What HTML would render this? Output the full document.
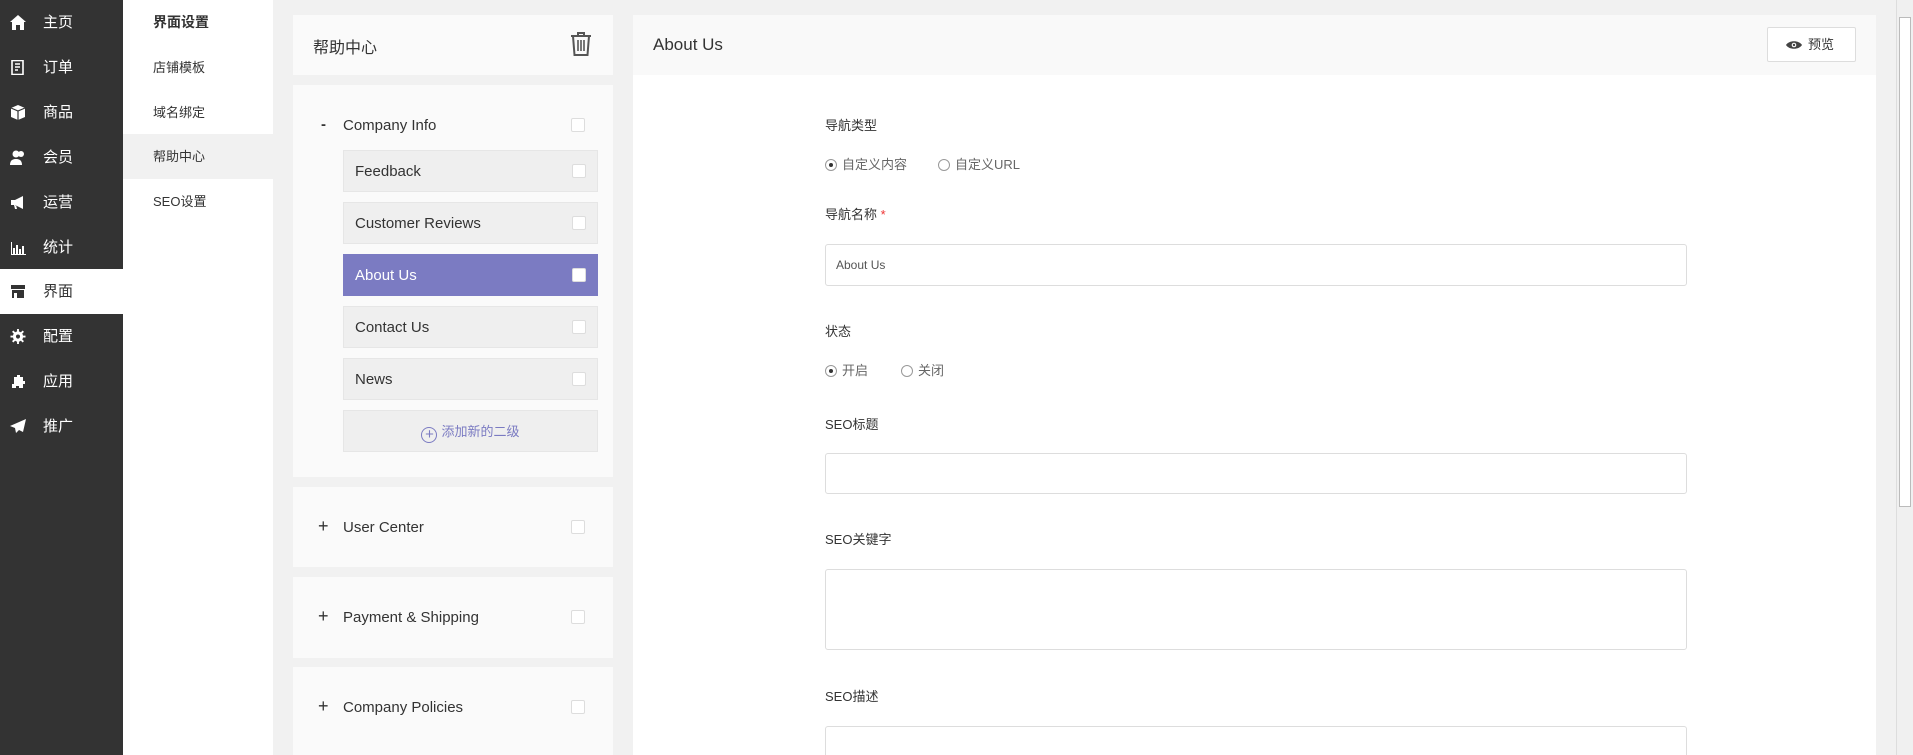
<!DOCTYPE html>
<html><head><meta charset="utf-8"><style>
*{box-sizing:border-box;margin:0;padding:0}
html{width:1913px;height:755px;overflow:hidden}
body{width:1913px;height:755px;overflow:hidden;background:#f1f1f1;font-family:"Liberation Sans","Noto Sans CJK SC",sans-serif;color:#333;position:relative}
.side{position:absolute;left:0;top:0;width:123px;height:755px;background:#333}
.side .it{position:absolute;left:0;width:123px;height:45px;color:#fff;font-size:15px;line-height:45px;padding-left:43px}
.side .it.on{background:#fff;color:#333}
.side .ic{position:absolute;left:10px;top:15px;width:16px;height:15px}
.sub{position:absolute;left:123px;top:0;width:150px;height:755px;background:#fff}
.sub div{position:absolute;left:0;width:150px;height:45px;line-height:45px;padding-left:30px;font-size:13px;color:#333}
.sub .hd{font-weight:bold;font-size:14px}
.sub .on{background:#f1f1f1}
.pn{position:absolute;left:293px;width:320px;background:#fafafa;overflow:hidden}
.box{position:absolute;left:50px;width:255px;height:42px;background:#efefef;border:1px solid #e6e6e6;font-size:15px;line-height:42px;padding-left:11px;color:#333}
.cb{position:absolute;right:11px;top:13px;width:14px;height:14px;border:1px solid #ddd;background:#fff;border-radius:2px}
.box.on{background:#7b7bc2;border-color:#7b7bc2;color:#fff}
.grp{font-size:15px;position:absolute;left:50px}
.main{position:absolute;left:633px;top:15px;width:1243px;height:740px;background:#fff;overflow:hidden}
.mh{height:60px;background:#f9f9f9;font-size:17px;line-height:60px;padding-left:20px}
.lb{position:absolute;left:192px;font-size:13px;color:#333}
.inp{position:absolute;left:192px;width:862px;border:1px solid #ddd;border-radius:3px;background:#fff}
.rd{position:absolute;font-size:13px;color:#666}
.rd i{display:inline-block;width:12px;height:12px;border:1px solid #999;border-radius:50%;vertical-align:-2px;margin-right:5px;position:relative}
.rd i.s:after{content:"";position:absolute;left:3px;top:3px;width:4px;height:4px;border-radius:50%;background:#333}
</style></head><body>
<div class="side">
<div class="it" style="top:0"><svg class="ic" viewBox="0 0 16 15"><path d="M8 0L0 7h2v8h4v-5h4v5h4V7h2z" fill="#fff"/></svg>主页</div>
<div class="it" style="top:45px"><svg class="ic" viewBox="0 0 16 15"><rect x="2" y="0.5" width="11" height="14" fill="none" stroke="#fff" stroke-width="1.6"/><path d="M5 4h5M5 7h5M5 10h3" stroke="#fff" stroke-width="1.4"/></svg>订单</div>
<div class="it" style="top:90px"><svg class="ic" viewBox="0 0 16 15"><path d="M8 0L1 3v9l7 3 7-3V3z" fill="#fff"/><path d="M8 6v9M1 3l7 3 7-3" stroke="#333" stroke-width="1.2" fill="none"/></svg>商品</div>
<div class="it" style="top:135px"><svg class="ic" viewBox="0 0 16 15"><circle cx="6" cy="4" r="3.5" fill="#fff"/><path d="M0 15c0-5 3-6 6-6s6 1 6 6z" fill="#fff"/><circle cx="11" cy="4" r="3" fill="#fff"/></svg>会员</div>
<div class="it" style="top:180px"><svg class="ic" viewBox="0 0 16 15"><path d="M1 5h4l8-4v13L5 10H1z M4 10l1 4h2l-1-4" fill="#fff"/></svg>运营</div>
<div class="it" style="top:225px"><svg class="ic" viewBox="0 0 16 15"><path d="M1 2v13h15v-1H2V2zM3 8h2v6H3zM6 5h2v9H6zM9 9h2v5H9zM12 6h2v8h-2z" fill="#fff"/></svg>统计</div>
<div class="it on" style="top:269px"><svg class="ic" viewBox="0 0 16 15"><path d="M1 1h14v4H1zM2 6h12v8H2z" fill="#333"/><path d="M4 9h3v5H4z" fill="#fff"/></svg>界面</div>
<div class="it" style="top:314px"><svg class="ic" viewBox="0 0 16 16"><circle cx="8" cy="8" r="5.5" fill="#fff"/><path d="M7 0h2v16H7zM0 7h16v2H0z" fill="#fff"/><path d="M7 0h2v16H7zM0 7h16v2H0z" fill="#fff" transform="rotate(45 8 8)"/><circle cx="8" cy="8" r="2.2" fill="#333"/></svg>配置</div>
<div class="it" style="top:359px"><svg class="ic" viewBox="0 0 16 15"><path d="M4 3h3V1h3v2h3v4h2v3h-2v4H9v-2H6v2H2v-4h2z" fill="#fff"/></svg>应用</div>
<div class="it" style="top:404px"><svg class="ic" viewBox="0 0 16 15"><path d="M16 0L0 7l5 2 1 5 3-3 4 2z" fill="#fff"/></svg>推广</div>
</div>
<div class="sub">
<div class="hd" style="top:0">界面设置</div>
<div style="top:45px">店铺模板</div>
<div style="top:90px">域名绑定</div>
<div class="on" style="top:134px">帮助中心</div>
<div style="top:179px">SEO设置</div>
</div>
<div class="pn" style="top:15px;height:60px"><div style="position:absolute;left:20px;top:19px;font-size:16px">帮助中心</div>
<svg style="position:absolute;left:277px;top:16px" width="22" height="26" viewBox="0 0 22 26"><path d="M1 5h20M8 5V2h6v3M3 5l1.5 19h13L19 5" fill="none" stroke="#555" stroke-width="2"/><path d="M8 9v11M11 9v11M14 9v11" stroke="#555" stroke-width="1.6"/></svg></div>
<div class="pn" style="top:85px;height:392px">
<div class="grp" style="left:28px;top:31px;font-weight:bold">-</div><div class="grp" style="left:50px;top:32px;font-size:15px">Company Info</div><div class="cb" style="right:28px;top:33px"></div>
<div class="box" style="top:65px">Feedback<span class="cb"></span></div>
<div class="box" style="top:117px">Customer Reviews<span class="cb"></span></div>
<div class="box on" style="top:169px">About Us<span class="cb"></span></div>
<div class="box" style="top:221px">Contact Us<span class="cb"></span></div>
<div class="box" style="top:273px">News<span class="cb"></span></div>
<div class="box" style="top:325px;text-align:center;padding:0;font-size:13px;color:#7b7bc2"><span style="display:inline-block;width:16px;height:16px;border:1px solid #7b7bc2;border-radius:50%;line-height:13px;font-size:15px;vertical-align:-3px;margin-right:4px">+</span>添加新的二级</div>
</div>
<div class="pn" style="top:487px;height:80px"><div class="grp" style="left:25px;top:29px;font-size:18px">+</div><div class="grp" style="left:50px;top:32px;font-size:15px">User Center</div><div class="cb" style="right:28px;top:33px"></div></div>
<div class="pn" style="top:577px;height:81px"><div class="grp" style="left:25px;top:29px;font-size:18px">+</div><div class="grp" style="left:50px;top:32px;font-size:15px">Payment &amp; Shipping</div><div class="cb" style="right:28px;top:33px"></div></div>
<div class="pn" style="top:667px;height:88px"><div class="grp" style="left:25px;top:29px;font-size:18px">+</div><div class="grp" style="left:50px;top:32px;font-size:15px">Company Policies</div><div class="cb" style="right:28px;top:33px"></div></div>
<div class="main">
<div class="mh">About Us</div>
<div style="position:absolute;left:1134px;top:12px;width:89px;height:35px;border:1px solid #ddd;background:#fff;border-radius:2px;font-size:13px;line-height:33px;padding-left:40px">预览<svg style="position:absolute;left:18px;top:12px" width="16" height="10" viewBox="0 0 16 10"><path d="M0 5C3 0 13 0 16 5 13 10 3 10 0 5z" fill="#444"/><circle cx="8" cy="5" r="2.3" fill="#fff"/><circle cx="8" cy="5" r="1.2" fill="#444"/></svg></div>
<div class="lb" style="top:100px">导航类型</div>
<div class="rd" style="left:192px;top:139px"><i class="s"></i>自定义内容</div>
<div class="rd" style="left:305px;top:139px"><i></i>自定义URL</div>
<div class="lb" style="top:189px">导航名称 <span style="color:#e33">*</span></div>
<div class="inp" style="top:229px;height:42px;font-size:12px;color:#555;line-height:40px;padding-left:10px">About Us</div>
<div class="lb" style="top:306px">状态</div>
<div class="rd" style="left:192px;top:345px"><i class="s"></i>开启</div>
<div class="rd" style="left:268px;top:345px"><i></i>关闭</div>
<div class="lb" style="top:399px">SEO标题</div>
<div class="inp" style="top:438px;height:41px"></div>
<div class="lb" style="top:514px">SEO关键字</div>
<div class="inp" style="top:554px;height:81px"></div>
<div class="lb" style="top:671px">SEO描述</div>
<div class="inp" style="top:711px;height:60px"></div>
</div>
<div style="position:absolute;left:1896px;top:0;width:17px;height:755px;background:#f0f0f0;border-left:1px solid #ddd"><div style="position:absolute;left:2px;top:17px;width:12px;height:490px;background:#fff;border:1px solid #bbb"></div></div>
</body></html>
